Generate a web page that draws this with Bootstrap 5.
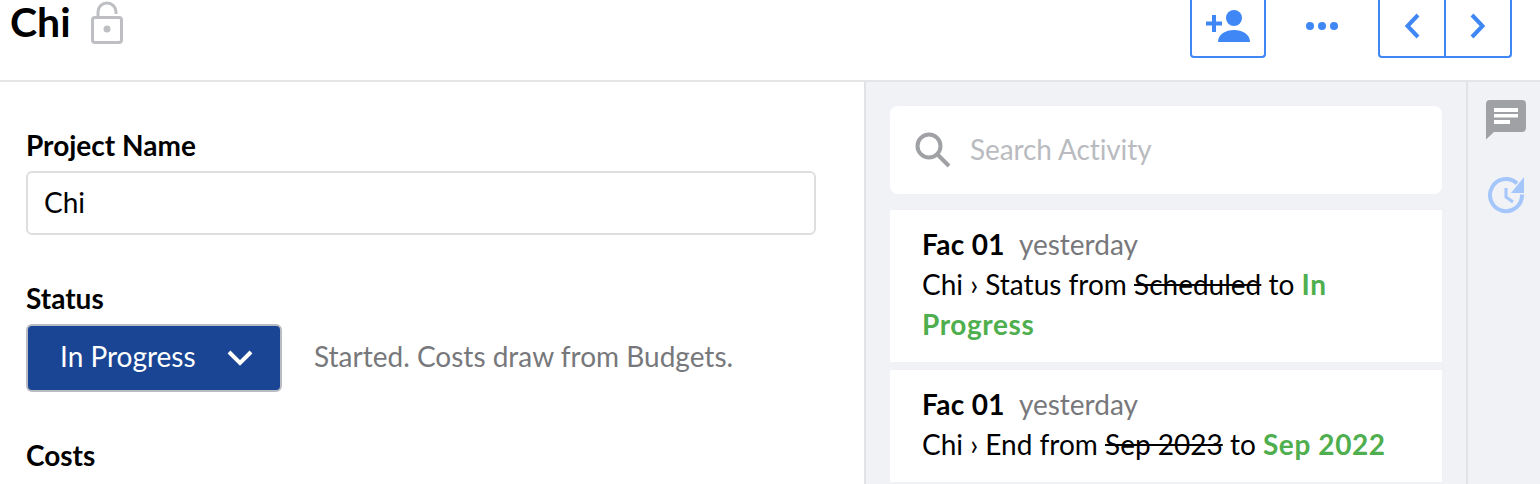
<!DOCTYPE html>
<html lang="en"><head><meta charset="utf-8"><title>Chi</title>
<link href="https://cdn.jsdelivr.net/npm/bootstrap@5.3.0/dist/css/bootstrap.min.css" rel="stylesheet">
<style>
html,body{height:484px;overflow:hidden;background:#fff}
body{font-family:"Lato","Open Sans",sans-serif;color:#000;font-size:28px;line-height:40px}
.topbar{height:82px;border-bottom:2px solid #e4e5e6;padding:0 28px 0 10px;align-items:flex-start}
.page-title{font-size:41px;font-weight:700;line-height:44px;margin:0}
.lock-ico{margin:0 0 0 19px}
.btn-line{width:76px;height:58px;border:2px solid #3f87f5;border-top-width:0;border-radius:0 0 4px 4px;background:#fff;padding:0 0 4px;display:flex;align-items:center;justify-content:center}
.btn-plain{width:112px;height:58px;display:flex;align-items:center;justify-content:center;background:none;border:0;padding:0 0 6px}
.btn-pair .btn-line{width:68px;border-radius:0}
.btn-pair .btn-line:first-child{border-radius:0 0 0 4px}
.btn-pair .btn-line:last-child{border-left:0;border-radius:0 0 4px 0;width:66px}
.workspace{height:402px}
.form-pane{width:864px;padding:43px 48px 0 26px;flex:none}
.activity-pane{width:604px;flex:none;background:#f1f2f6;border-left:2px solid #e0e2e4;border-right:2px solid #e0e2e4;padding:24px 24px 0}
.rail-pane{flex:1;background:#f1f2f6;padding:18px 0 0 18px}
.field-label{font-size:28px;font-weight:700;line-height:40px;margin:0 0 6px;display:block}
.name-input{height:64px;border:2px solid #dcdee0;border-radius:6px;font-size:28px;padding:0 16px 2px;color:#000;font-family:inherit;margin-bottom:43px}
.status-row{margin-top:5px;margin-bottom:43px}
.status-btn{width:256px;height:68px;background:#194594;border:2px solid #b9bcc2;border-radius:6px;color:#fff;font-size:28px;padding:0 27px 4px 32px}
.status-btn svg{margin-top:4px}
.status-help{color:#77787b;margin-left:32px;padding-bottom:4px}
.search-card{height:88px;background:#fff;border-radius:8px;padding-left:24px;margin-bottom:16px}
.search-text{color:#b9bbc0;margin-left:18px;padding-bottom:2px;letter-spacing:-.1px}
.feed-item{background:#fff;padding:14px 32px 18px;margin-bottom:8px}
.feed-who{font-weight:700;letter-spacing:.3px}
.feed-when{color:#77787b;margin-left:7px}
.feed-new{color:#4fae4e;font-weight:700;letter-spacing:.6px}
.rail-ico{display:block;margin-bottom:36px}
</style></head>
<body>
<header class="topbar d-flex justify-content-between">
  <div class="d-flex align-items-start">
    <h1 class="page-title">Chi</h1>
    <svg class="lock-ico" width="34" height="44" viewBox="0 0 34 44" aria-hidden="true"><path d="M8 17V12a9 9 0 0 1 18 0v2" fill="none" stroke="#bdbfc3" stroke-width="3"/><rect x="2.500" y="17.500" width="29" height="25" rx="2.500" fill="none" stroke="#bdbfc3" stroke-width="3"/><circle cx="17" cy="29" r="3.500" fill="#bdbfc3"/></svg>
  </div>
  <div class="d-flex">
    <button class="btn-line" aria-label="Add person"><svg width="46" height="36" viewBox="0 -2 46 36"><path d="M7 5v6.500H1v4h6V22h4v-6.500h6v-4h-6V5z" fill="#3f87f5"/><circle cx="29" cy="8" r="8" fill="#3f87f5"/><path d="M13 32c0-8 8-12 16-12s16 4 16 12z" fill="#3f87f5"/></svg></button>
    <button class="btn-plain" aria-label="More"><svg width="34" height="10" viewBox="0 0 34 10"><circle cx="5" cy="5" r="4" fill="#3f87f5"/><circle cx="17" cy="5" r="4" fill="#3f87f5"/><circle cx="29" cy="5" r="4" fill="#3f87f5"/></svg></button>
    <div class="btn-pair d-flex">
      <button class="btn-line" aria-label="Previous"><svg width="18" height="28" viewBox="0 0 18 28"><path d="M15 3 4.500 14 15 25" fill="none" stroke="#3f87f5" stroke-width="4"/></svg></button>
      <button class="btn-line" aria-label="Next"><svg width="18" height="28" viewBox="0 0 18 28"><path d="M3 3l10.500 11L3 25" fill="none" stroke="#3f87f5" stroke-width="4"/></svg></button>
    </div>
  </div>
</header>
<main class="workspace d-flex">
  <section class="form-pane">
    <label class="field-label" for="pn">Project Name</label>
    <input id="pn" class="form-control name-input" value="Chi">
    <div class="field-label">Status</div>
    <div class="status-row d-flex align-items-center">
      <button class="status-btn d-flex align-items-center justify-content-between">In Progress <svg width="26" height="16" viewBox="0 0 26 16"><path d="m2 2 11 11L24 2" fill="none" stroke="#fff" stroke-width="4"/></svg></button>
      <span class="status-help">Started. Costs draw from Budgets.</span>
    </div>
    <div class="field-label">Costs</div>
  </section>
  <section class="activity-pane">
    <div class="search-card d-flex align-items-center">
      <svg width="38" height="38" viewBox="0 0 38 38"><circle cx="15" cy="15" r="11.500" fill="none" stroke="#a0a1a5" stroke-width="4"/><path d="m23 23 12 12" stroke="#a0a1a5" stroke-width="4"/></svg>
      <span class="search-text">Search Activity</span>
    </div>
    <div class="feed-item"><div><span class="feed-who">Fac 01</span> <span class="feed-when">yesterday</span></div><div>Chi › Status from <s>Scheduled</s> to <span class="feed-new">In</span> <span class="feed-new">Progress</span></div></div>
    <div class="feed-item"><div><span class="feed-who">Fac 01</span> <span class="feed-when">yesterday</span></div><div>Chi › End from <s>Sep 2023</s> to <span class="feed-new">Sep 2022</span></div></div>
  </section>
  <aside class="rail-pane">
    <svg class="rail-ico" width="40" height="40" viewBox="0 0 40 40"><path d="M4 0h32a4 4 0 0 1 4 4v24a4 4 0 0 1-4 4H8l-8 7.500V4a4 4 0 0 1 4-4z" fill="#a0a1a5"/><path d="M8 8h24v4H8zM8 14h24v3.500H8zM8 20h16v4H8z" fill="#fff"/></svg>
    <svg class="rail-ico" width="40" height="40" viewBox="0 0 40 40"><path d="M31 7.500A16 16 0 1 0 36 18.500" fill="none" stroke="#a4c6fb" stroke-width="4"/><path d="M20 12v9l7 5" fill="none" stroke="#a4c6fb" stroke-width="3"/><path d="M38 1v16H25z" fill="#a4c6fb"/></svg>
  </aside>
</main>
</body></html>
